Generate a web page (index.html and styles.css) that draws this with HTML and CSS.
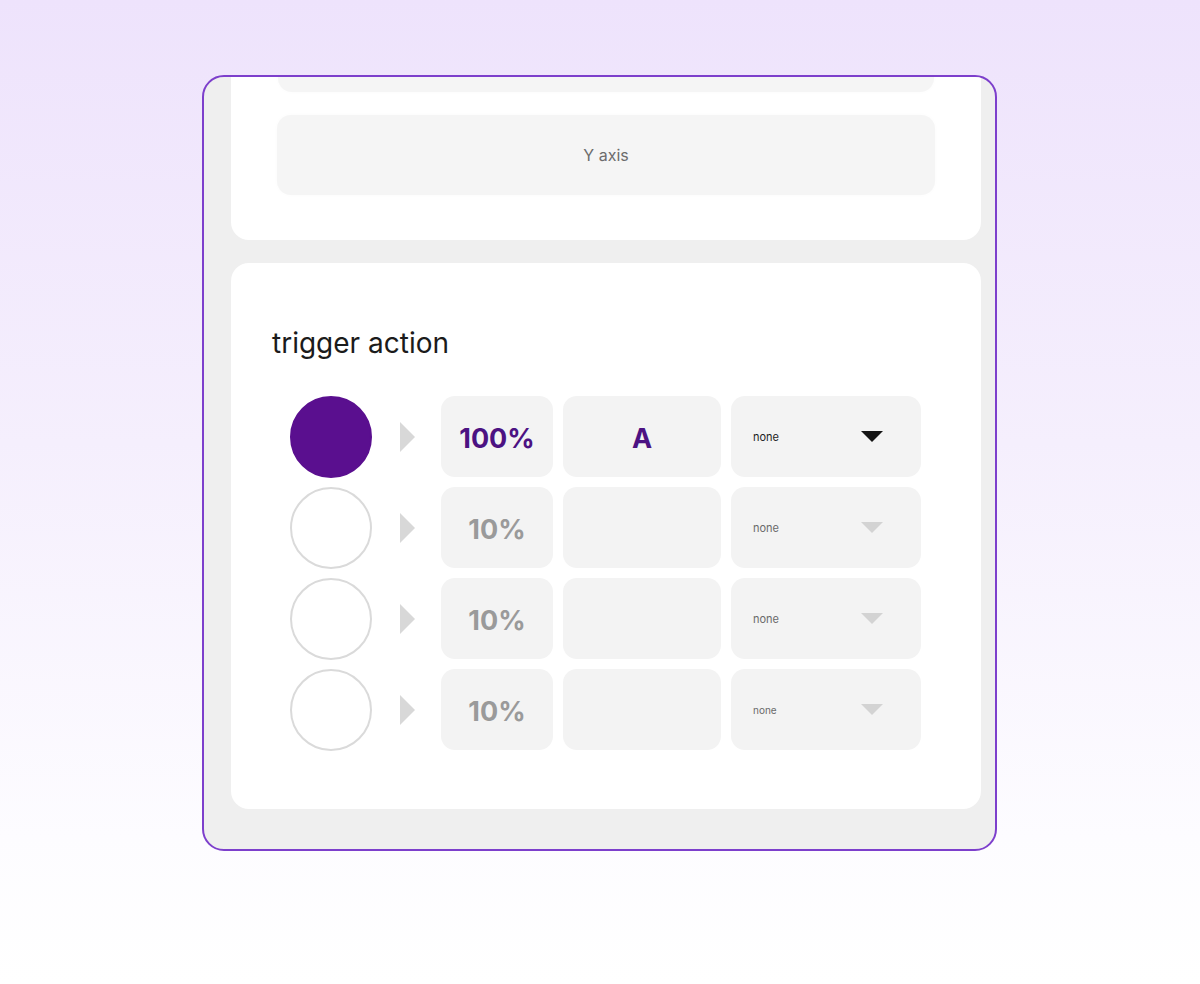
FILE: index.html
```html
<!DOCTYPE html>
<html>
<head>
<meta charset="utf-8">
<link rel="stylesheet" href="styles.css">
</head>
<body>
<div class="stage">
  <div class="frame">
    <div class="scroller">
      <section class="card card-top">
        <div class="field field-cut"></div>
        <div class="field">Y axis</div>
      </section>
      <section class="card card-trigger">
        <h2 class="title">trigger action</h2>
        <div class="rows">
          <div class="row">
            <span class="dot dot-on"></span>
            <span class="arrow"></span>
            <div class="box box-pct pct-on">100%</div>
            <div class="box box-key key-on">A</div>
            <div class="box box-select sel-on"><span class="sel-text">none</span><span class="caret"></span></div>
          </div>
          <div class="row">
            <span class="dot"></span>
            <span class="arrow"></span>
            <div class="box box-pct">10%</div>
            <div class="box box-key"></div>
            <div class="box box-select"><span class="sel-text">none</span><span class="caret"></span></div>
          </div>
          <div class="row">
            <span class="dot"></span>
            <span class="arrow"></span>
            <div class="box box-pct">10%</div>
            <div class="box box-key"></div>
            <div class="box box-select"><span class="sel-text">none</span><span class="caret"></span></div>
          </div>
          <div class="row">
            <span class="dot"></span>
            <span class="arrow"></span>
            <div class="box box-pct">10%</div>
            <div class="box box-key"></div>
            <div class="box box-select"><span class="sel-text sel-small">none</span><span class="caret"></span></div>
          </div>
        </div>
      </section>
    </div>
  </div>
</div>
</body>
</html>
```
FILE: styles.css
```css
html, body {
  margin: 0;
  padding: 0;
}
body {
  width: 1200px;
  height: 984px;
  background: linear-gradient(180deg, #eee3fc 0%, #f5effd 45%, #fdfcff 85%, #ffffff 100%);
  font-family: Inter, "Open Sans", sans-serif;
  overflow: hidden;
}
.stage {
  padding-top: 75px;
  padding-left: 202px;
  display: flex;
}
.frame {
  width: 791px;
  height: 772px;
  border: 2px solid #7d3fcc;
  border-radius: 22px;
  background: #efefef;
  overflow: hidden;
}
.scroller {
  padding: 0 14px 0 27px;
  margin-top: -40px;
  display: flex;
  flex-direction: column;
  gap: 23px;
}
.card {
  background: #ffffff;
  border-radius: 18px;
}
.card-top {
  padding: 0 46px 45px 46px;
  display: flex;
  flex-direction: column;
  gap: 23px;
}
.field {
  height: 80px;
  background: #f5f5f5;
  border-radius: 14px;
  display: flex;
  align-items: center;
  justify-content: center;
  font-size: 16px;
  color: #6c6c6c;
  box-shadow: 0 0 4px rgba(0,0,0,0.02);
}
.field-cut {
  height: 55px;
  margin: 0 1px;
}
.card-trigger {
  padding: 63px 60px 59px 41px;
}
.title {
  margin: 0;
  font-size: 28px;
  font-weight: 400;
  line-height: 34px;
  color: #1b1b1b;
}
.rows {
  margin-top: 36px;
  padding-left: 18px;
  display: flex;
  flex-direction: column;
  gap: 10px;
}
.row {
  display: flex;
  align-items: center;
  height: 81px;
}
.dot {
  width: 78px;
  height: 78px;
  border-radius: 50%;
  border: 2px solid #dadada;
  background: #fff;
  flex: none;
}
.dot-on {
  background: #5a0f8f;
  border-color: #5a0f8f;
}
.arrow {
  width: 0;
  height: 0;
  border-top: 15px solid transparent;
  border-bottom: 15px solid transparent;
  border-left: 15px solid #d8d8d8;
  margin-left: 28px;
  margin-right: 26px;
  flex: none;
}
.box {
  height: 81px;
  background: #f3f3f3;
  border-radius: 14px;
  display: flex;
  align-items: center;
  justify-content: center;
  flex: none;
  box-sizing: border-box;
}
.box + .box {
  margin-left: 10px;
}
.box-pct {
  width: 112px;
  font-size: 27px;
  font-weight: 700;
  color: #9a9a9a;
  padding-top: 3px;
}
.pct-on {
  color: #4c1282;
}
.box-key {
  width: 158px;
  font-size: 27px;
  font-weight: 700;
  color: #4c1282;
  padding-top: 3px;
}
.box-select {
  width: 190px;
  justify-content: flex-start;
  padding-left: 22px;
}
.sel-text {
  font-size: 11px;
  color: #6a6a6a;
  width: 108px;
}
.sel-small {
  font-size: 10px;
}
.sel-on .sel-text {
  color: #1d1d1d;
}
.caret {
  width: 0;
  height: 0;
  border-left: 11px solid transparent;
  border-right: 11px solid transparent;
  border-top: 11px solid #d3d3d3;
}
.sel-on .caret {
  border-top-color: #141414;
}
```
